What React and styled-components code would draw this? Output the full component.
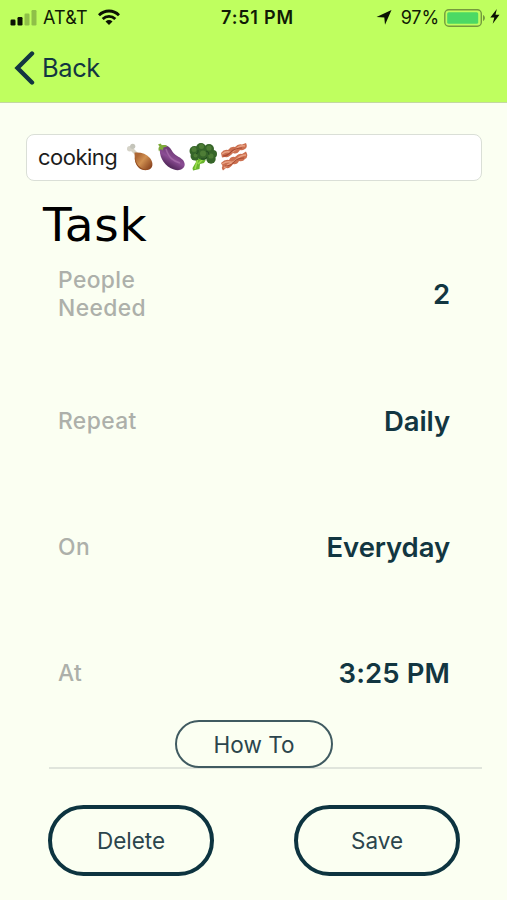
import React, { useState } from 'react'
import styled, { createGlobalStyle } from 'styled-components'

const GlobalStyle = createGlobalStyle`
  * {
    box-sizing: border-box;
  }
  body {
    margin: 0;
    background-color: #fbfff2;
    font-family: Inter, 'Liberation Sans', sans-serif;
  }
`
const Screen = styled.div`
  display: flex;
  flex-direction: column;
  width: 507px;
  height: 900px;
  overflow: hidden;
  background-color: #fbfff2;
`
const Header = styled.header`
  height: 103px;
  background-color: #bfff5f;
  border-bottom: 1px solid #c3d8a2;
`
const StatusBar = styled.div`
  display: grid;
  grid-template-columns: 1fr auto 1fr;
  align-items: center;
  height: 35px;
  padding: 0 7px 0 10px;
  color: #101a05;
`
const StatusGroup = styled.div`
  display: flex;
  align-items: center;
  justify-content: ${(props) => (props.$end ? 'flex-end' : 'flex-start')};
`
const StatusText = styled.span`
  font-size: 18px;
  line-height: 22px;
  font-weight: ${(props) => props.$weight || 400};
  letter-spacing: ${(props) => props.$spacing || '0'};
  margin: ${(props) => props.$margin || '0'};
`
const BackButton = styled.button`
  display: flex;
  align-items: center;
  gap: 7px;
  height: 65px;
  padding: 0 0 0 14px;
  border: none;
  background: transparent;
  color: #123641;
  font-family: inherit;
  font-size: 25.5px;
  letter-spacing: -0.4px;
`
const Content = styled.main`
  display: flex;
  flex-direction: column;
  padding: 31px 25px 0 26px;
`
const TaskInput = styled.div`
  display: flex;
  align-items: center;
  height: 47px;
  padding: 0 11px 1px;
  border: 1px solid #dadfd7;
  border-radius: 8px;
  background-color: #ffffff;
  color: #1c1c1c;
  font-size: 22px;
  letter-spacing: -0.5px;
`
const EmojiList = styled.span`
  display: flex;
  gap: 3px;
  margin-left: 9px;
`
const Title = styled.h1`
  margin: 16px 0 0 17px;
  color: #000000;
  font-family: 'DejaVu Sans', sans-serif;
  font-size: 47px;
  font-weight: 400;
  line-height: 56px;
  letter-spacing: 0.8px;
`
const Fields = styled.div`
  display: grid;
  grid-template-rows: repeat(4, 126.4px);
  height: 489px;
  margin-top: -22px;
  padding: 0 32px;
`
const Field = styled.div`
  display: flex;
  align-items: center;
  justify-content: space-between;
`
const Label = styled.span`
  width: 110px;
  color: #adb0aa;
  font-size: 22.8px;
  font-weight: 500;
  line-height: 28px;
  letter-spacing: 0.4px;
`
const Value = styled.span`
  color: #123641;
  font-size: 27.5px;
  font-weight: 600;
  letter-spacing: ${(props) => props.$spacing || '-0.1px'};
`
const HowTo = styled.div`
  display: flex;
  justify-content: center;
  margin-left: 23px;
  padding-right: 23px;
  border-bottom: 2px solid #e0e5dc;
`
const Button = styled.button`
  width: ${(props) => (props.$small ? '158px' : '166px')};
  height: ${(props) => (props.$small ? '48px' : '71px')};
  margin-bottom: ${(props) => (props.$small ? '-1px' : '0')};
  padding: 0;
  border: ${(props) => (props.$small ? '2px solid #405b61' : '4px solid #0d3440')};
  border-radius: 36px;
  background-color: transparent;
  color: #2b454c;
  font-family: inherit;
  font-size: 22.5px;
`
const Actions = styled.div`
  display: flex;
  justify-content: space-between;
  margin-top: 36px;
  padding: 0 22px 0 22px;
`

const SignalIcon = () => (
  <svg width='27' height='16' viewBox='0 0 27 16'>
    <rect x='0.5' y='9.5' width='5' height='6' rx='1.2' fill='#0b1203' />
    <rect x='7.5' y='7' width='5' height='8.5' rx='1.2' fill='#0b1203' />
    <rect x='14.5' y='3.5' width='5' height='12' rx='1.2' fill='#8fc048' />
    <rect x='21.5' y='0' width='5' height='15.5' rx='1.2' fill='#8fc048' />
  </svg>
)

const WifiIcon = () => (
  <svg width='22' height='17' viewBox='0 0 22 17'>
    <g fill='none' stroke='#0b1203' strokeWidth='2.8'>
      <path d='M1 6.2C6.5 .6 15.5 .6 21 6.2' />
      <path d='M4.7 10C8.3 6.4 13.7 6.4 17.3 10' />
    </g>
    <path d='M7.5 12.4Q11 9.5 14.5 12.4L11 16Z' fill='#0b1203' />
  </svg>
)

const LocationIcon = () => (
  <svg width='16' height='15' viewBox='0 0 16 15'>
    <path d='M15.5 0L9 14.7L8.3 7.5L.5 7Z' fill='#0b1203' />
  </svg>
)

const BatteryIcon = () => (
  <svg width='42' height='18' viewBox='0 0 42 18'>
    <rect x='.8' y='.8' width='36.5' height='16.4' rx='4' fill='none' stroke='#749a3d' strokeWidth='1.4' />
    <rect x='3.2' y='3.2' width='31' height='11.6' rx='1.5' fill='#4cd964' />
    <path d='M39 6C41.5 7 41.5 11 39 12Z' fill='#749a3d' />
  </svg>
)

const BoltIcon = () => (
  <svg width='10' height='15' viewBox='0 0 10 15'>
    <path d='M6.8 0L.3 8.6H4.3L2.7 14.7L9.5 5.8H5.5Z' fill='#0b1203' />
  </svg>
)

const BackIcon = () => (
  <svg width='21' height='34' viewBox='0 0 21 34'>
    <path d='M18 2.5L3.5 17L18 31.5' fill='none' stroke='#123641' strokeWidth='4.4' strokeLinecap='round' />
  </svg>
)

const DrumstickIcon = () => (
  <svg width='28' height='28' viewBox='0 0 28 28'>
    <defs>
      <linearGradient id='meat' x1='0' y1='0' x2='1' y2='.8'>
        <stop offset='.2' stopColor='#ad6733' />
        <stop offset='.5' stopColor='#d09051' />
        <stop offset='1' stopColor='#87401c' />
      </linearGradient>
    </defs>
    <path d='M5.5 6L11 11.5' stroke='#d6d2c3' strokeWidth='3.5' />
    <circle cx='3.7' cy='5.7' r='2.7' fill='#d5d3c8' />
    <circle cx='6.7' cy='3.3' r='2.6' fill='#c4c4ba' />
    <path d='M8.5 9.5C15 9 20 10.5 24 15C28 20 27 26.5 21.5 27C15 28 9.5 23 8.8 16Z' fill='url(#meat)' />
    <path d='M9 14C9.5 21 14 26 21 26.8C14 28 9.5 23 8.8 16Z' fill='#914b20' />
  </svg>
)

const EggplantIcon = () => (
  <svg width='29' height='28' viewBox='0 0 29 28'>
    <defs>
      <linearGradient id='skin' x1='.7' y1='.2' x2='.3' y2='.9'>
        <stop offset='0' stopColor='#67356f' />
        <stop offset='.5' stopColor='#8b4d94' />
        <stop offset='1' stopColor='#47204f' />
      </linearGradient>
    </defs>
    <path d='M3 4C6 .8 12 2 14.5 7C17.5 13 22 13 26 17C31 24 24 29 17 26.5C7 23.5 1.5 13 3 4Z' fill='url(#skin)' />
    <path d='M9 6C12 15 16 18 23 20' fill='none' stroke='#aa72ad' strokeWidth='1.5' opacity='.7' />
    <path d='M1 1.5L3.5 .5L5 2.3C7 1.5 9.5 2 10.5 3.5L6.5 4.5L5.5 7.5L3.8 6L2 8.5C1 6 1.5 4 2.5 3.5Z' fill='#7eaa3a' />
  </svg>
)

const BroccoliIcon = () => (
  <svg width='28' height='28' viewBox='0 0 28 28'>
    <path d='M6 15L17 16.5L15 20L11 21L10.5 26L4 27.5L3.5 25L7 19Z' fill='#68b52c' />
    <path d='M8.5 17L6 26M14 16L9 21' stroke='#9bdc4c' strokeWidth='1.5' />
    <g fill='#366529'>
      <circle cx='5.5' cy='8' r='5' />
      <circle cx='12' cy='5' r='5' />
      <circle cx='20' cy='6' r='5' />
      <circle cx='24' cy='11' r='4' />
      <circle cx='22' cy='16' r='4.7' />
      <circle cx='14' cy='11' r='6' />
      <circle cx='6' cy='13' r='4.5' />
    </g>
    <g fill='#4e7d36'>
      <circle cx='5' cy='6.5' r='2.5' />
      <circle cx='12.5' cy='3.5' r='2.5' />
      <circle cx='20' cy='5' r='2.6' />
      <circle cx='14' cy='10.5' r='3' />
      <circle cx='22' cy='13' r='2.6' />
      <circle cx='6.5' cy='12.5' r='2' />
    </g>
    <path d='M9 7Q10 10 7 11M17 8Q20 8 20 12M12 16Q17 17 18 14' fill='none' stroke='#214a20' />
  </svg>
)

const BaconIcon = () => (
  <svg width='28' height='28' viewBox='0 0 28 28'>
    <g fill='#cc7050'>
      <path d='M1 10Q4 6 8 7Q11 3 15 4Q18 .5 22 1.5L26 0Q28 4 25 6Q22 8 20 7Q17 12 13 10Q9 15 5 14L2 14.5Z' />
      <path d='M1 20Q5 16 9 17Q11 13 15 14Q19 10 22 11L26 8.5Q29 14 25 16Q23 19 19 18Q17 22 13 21Q10 26 6 25L3 27.5Q1 25 2.5 23Z' />
    </g>
    <g fill='none' stroke='#e9a384' strokeWidth='1.4'>
      <path d='M2 11Q6 8 9 9T16 6T25 3' />
      <path d='M2 21Q7 18 10 19T17 16T26 12' />
      <path d='M4 25Q8 21 12 20' />
    </g>
    <path d='M3 13Q7 13 11 9T22 5M5 23Q11 23 14 19T24 15' fill='none' stroke='#a94b32' strokeWidth='1.2' />
  </svg>
)

const fields = [
  { label: 'People Needed', value: '2' },
  { label: 'Repeat', value: 'Daily' },
  { label: 'On', value: 'Everyday' },
  { label: 'At', value: '3:25 PM', spacing: '0.1px' },
]

const App = () => {
  const [name] = useState('cooking')

  return (
    <>
      <GlobalStyle />
      <Screen>
        <Header>
          <StatusBar>
            <StatusGroup>
              <SignalIcon />
              <StatusText $margin='0 10px 0 6px' $spacing='0.2px'>AT&amp;T</StatusText>
              <WifiIcon />
            </StatusGroup>
            <StatusText $weight={600} $spacing='0.8px' $margin='0 0 0 5px'>7:51 PM</StatusText>
            <StatusGroup $end>
              <LocationIcon />
              <StatusText $margin='0 5px 0 9px' $spacing='-0.1px'>97%</StatusText>
              <BatteryIcon />
              <StatusText $margin='0 0 0 4px'>
                <BoltIcon />
              </StatusText>
            </StatusGroup>
          </StatusBar>
          <BackButton>
            <BackIcon />
            Back
          </BackButton>
        </Header>
        <Content>
          <TaskInput>
            {name}
            <EmojiList>
              <DrumstickIcon />
              <EggplantIcon />
              <BroccoliIcon />
              <BaconIcon />
            </EmojiList>
          </TaskInput>
          <Title>Task</Title>
          <Fields>
            {fields.map((field) => (
              <Field key={field.label}>
                <Label>{field.label}</Label>
                <Value $spacing={field.spacing}>{field.value}</Value>
              </Field>
            ))}
          </Fields>
          <HowTo>
            <Button $small>How To</Button>
          </HowTo>
          <Actions>
            <Button>Delete</Button>
            <Button>Save</Button>
          </Actions>
        </Content>
      </Screen>
    </>
  )
}

export default App
